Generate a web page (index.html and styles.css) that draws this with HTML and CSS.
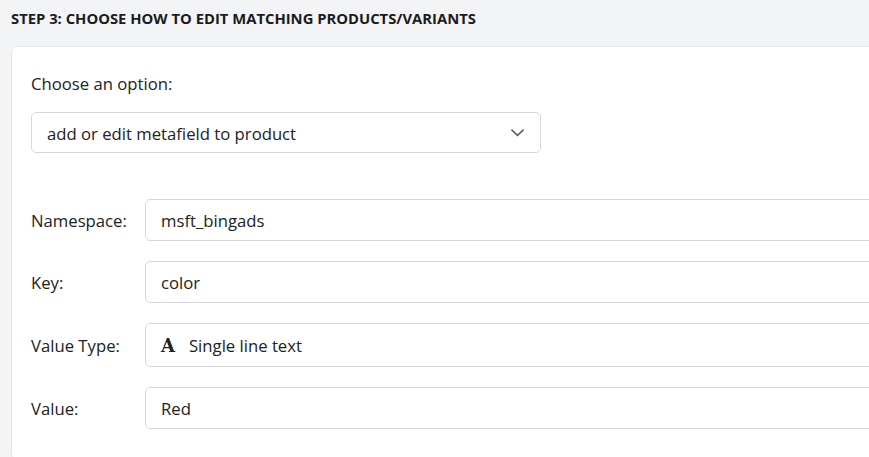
FILE: index.html
```html
<!DOCTYPE html>
<html>
<head>
    <meta charset="utf-8">
    <meta name="viewport" content="width=device-width, initial-scale=1.0">
    <title>Bulk edit - step 3</title>
    <link rel="stylesheet" href="styles.css">
</head>
<body>
    <h4 class="step-title">STEP 3: CHOOSE HOW TO EDIT MATCHING PRODUCTS/VARIANTS</h4>

    <div class="card">
        <label class="option-label">Choose an option:</label>
        <div class="select">
            <span>add or edit metafield to product</span>
            <svg class="chevron" width="13" height="8" viewBox="0 0 13 8">
                <path d="M1 1.2l5.5 5.3L12 1.2" fill="none" stroke="#5c5f62" stroke-width="1.7" stroke-linecap="round" stroke-linejoin="round"/>
            </svg>
        </div>

        <div class="fields">
            <div class="field">
                <label>Namespace:</label>
                <div class="input">msft_bingads</div>
            </div>
            <div class="field">
                <label>Key:</label>
                <div class="input">color</div>
            </div>
            <div class="field">
                <label>Value Type:</label>
                <div class="input input-type">
                    <span class="type-icon">A</span>
                    <span>Single line text</span>
                </div>
            </div>
            <div class="field">
                <label>Value:</label>
                <div class="input">Red</div>
            </div>
        </div>
    </div>
</body>
</html>
```

FILE: styles.css
```css
html, body {
    margin: 0;
    padding: 0;
    overflow: hidden;
}
body {
    font-family: "Open Sans", "Noto Sans", sans-serif;
    background: #f3f4f6;
    color: #202223;
    padding: 0 0 0 11px;
    width: 900px;
}
.step-title {
    margin: 0;
    padding-top: 8px;
    height: 38px;
    font-size: 14.8px;
    font-weight: 700;
    color: #1a1c1d;
}
.card {
    background: #fff;
    border: 1px solid #e6e7e9;
    border-radius: 6px;
    padding: 22px 19px 30px 19px;
    width: 838px;
    overflow: hidden;
}
.option-label {
    display: block;
    font-size: 16.7px;
    line-height: 30px;
    margin-bottom: 13px;
}
.select {
    display: flex;
    align-items: center;
    justify-content: space-between;
    width: 510px;
    height: 41px;
    box-sizing: border-box;
    border: 1px solid #d6d7d9;
    border-radius: 5px;
    padding: 1px 16px 0 15px;
    font-size: 16.7px;
}
.chevron {
    display: block;
}
.fields {
    margin-top: 46px;
    display: flex;
    flex-direction: column;
    gap: 20px;
}
.field {
    display: flex;
    align-items: center;
}
.field label {
    width: 114px;
    flex: none;
    font-size: 16.7px;
}
.input {
    flex: none;
    width: 760px;
    height: 42px;
    box-sizing: border-box;
    border: 1px solid #d6d7d9;
    border-radius: 5px;
    padding: 0 15px;
    display: flex;
    align-items: center;
    font-size: 16.7px;
}
.input-type {
    height: 44px;
    gap: 14px;
}
.type-icon {
    font-family: "DejaVu Serif", serif;
    font-weight: 700;
    font-size: 18px;
    color: #202223;
}
```
